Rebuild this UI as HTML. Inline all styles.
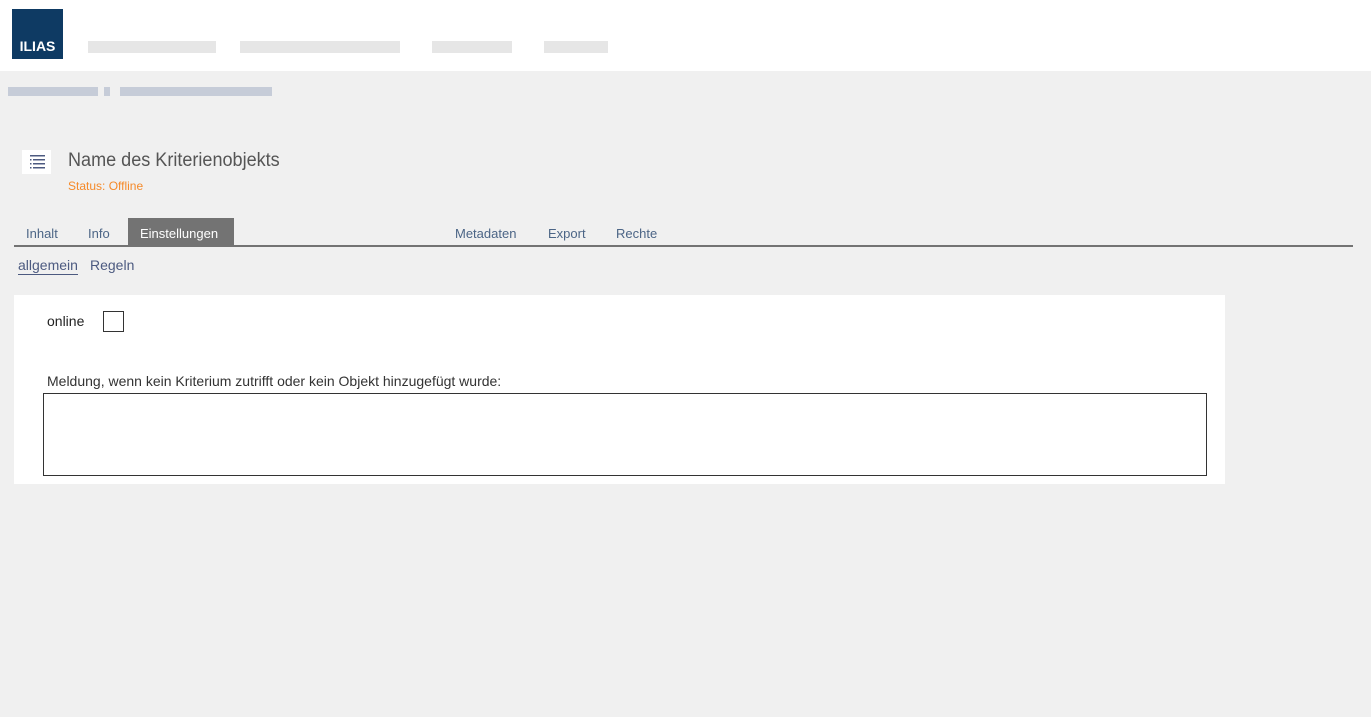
<!DOCTYPE html>
<html><head><style>
body{margin:0;width:1371px;height:717px;background:#f0f0f0;font-family:"Liberation Sans",sans-serif;position:relative;overflow:hidden}
.hdr{position:absolute;left:0;top:0;width:1371px;height:71px;background:#fff}
.logo{position:absolute;left:12px;top:9px;width:51px;height:50px;background:#0e3a63;color:#fff;font-weight:bold;font-size:14px;line-height:74px;text-align:center}
.blur{position:absolute;height:12px;background:#e6e6e6}
.crumb{position:absolute;height:9px;background:#c6ccd8;top:87px}
.abs{position:absolute}
.tab{position:absolute;top:226px;font-size:13px;color:#4c6586}
</style></head><body>
<div class="hdr"><div class="logo">ILIAS</div>
<div class="blur" style="left:88px;top:41px;width:128px"></div>
<div class="blur" style="left:240px;top:41px;width:160px"></div>
<div class="blur" style="left:432px;top:41px;width:80px"></div>
<div class="blur" style="left:544px;top:41px;width:64px"></div>
</div>
<div class="crumb" style="left:8px;width:90px"></div>
<div class="crumb" style="left:104px;width:6px"></div>
<div class="crumb" style="left:120px;width:152px"></div>
<div class="abs" style="left:22px;top:150px;width:29px;height:24px;background:#fff"></div>
<svg class="abs" style="left:29px;top:155px" width="16" height="14"><g fill="#4c5a80"><rect x="1" y="0" width="15" height="1.5"/><rect x="4" y="4" width="12" height="1.5"/><rect x="4" y="8" width="12" height="1.5"/><rect x="4" y="12" width="12" height="1.5"/><rect x="1" y="4" width="1.5" height="1.5"/><rect x="1" y="8" width="1.5" height="1.5"/><rect x="1" y="12" width="1.5" height="1.5"/></g></svg>
<div class="abs" style="left:68px;top:150px;font-size:19px;color:#555;transform:scaleX(0.95);transform-origin:0 0;white-space:nowrap">Name des Kriterienobjekts</div>
<div class="abs" style="left:68px;top:179px;font-size:12px;color:#f58a2a">Status: Offline</div>
<div class="abs" style="left:128px;top:218px;width:106px;height:28px;background:#737373"></div>
<div class="tab" style="left:26px">Inhalt</div>
<div class="tab" style="left:88px">Info</div>
<div class="tab" style="left:140px;color:#fff">Einstellungen</div>
<div class="tab" style="left:455px">Metadaten</div>
<div class="tab" style="left:548px">Export</div>
<div class="tab" style="left:616px">Rechte</div>
<div class="abs" style="left:14px;top:245px;width:1339px;height:2px;background:#737373"></div>
<div class="abs" style="left:18px;top:257px;font-size:14px;color:#4c5a80;border-bottom:1px solid #4c5a80;padding-bottom:1px">allgemein</div>
<div class="abs" style="left:90px;top:257px;font-size:14px;color:#4c5a80">Regeln</div>
<div class="abs" style="left:14px;top:295px;width:1211px;height:189px;background:#fff"></div>
<div class="abs" style="left:47px;top:313px;font-size:14px;color:#222">online</div>
<div class="abs" style="left:103px;top:311px;width:19px;height:19px;border:1px solid #333;background:#fff"></div>
<div class="abs" style="left:47px;top:373px;font-size:14px;color:#333">Meldung, wenn kein Kriterium zutrifft oder kein Objekt hinzugefügt wurde:</div>
<div class="abs" style="left:43px;top:393px;width:1162px;height:81px;border:1px solid #333;background:#fff"></div>
</body></html>
